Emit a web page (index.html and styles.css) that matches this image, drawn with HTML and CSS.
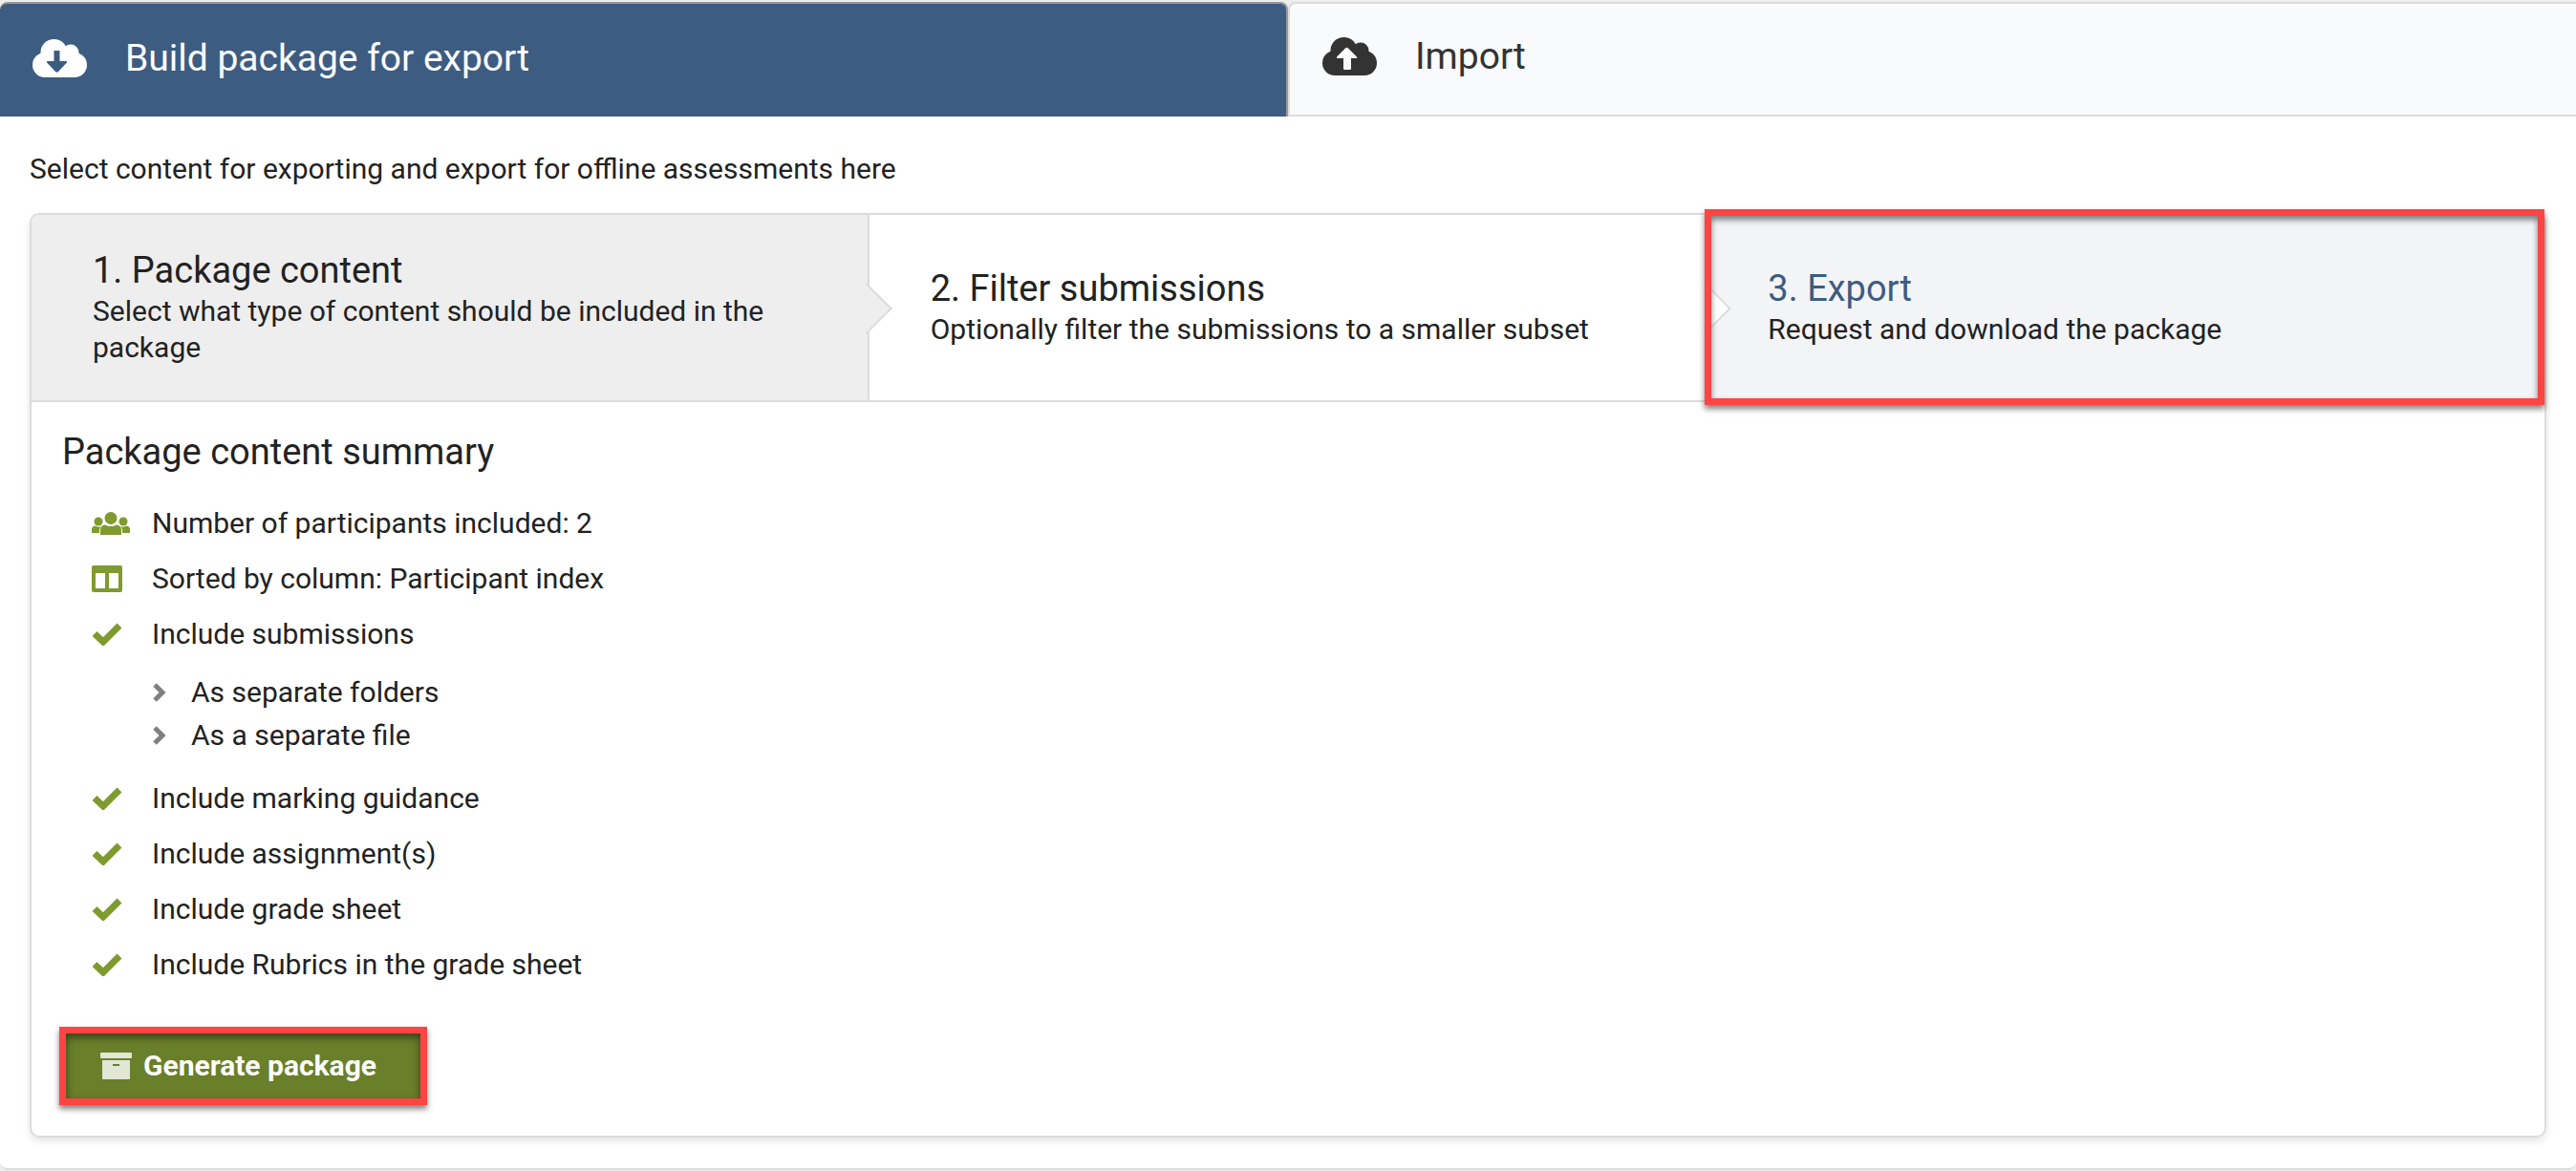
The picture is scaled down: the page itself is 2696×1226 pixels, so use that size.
FILE: index.html
```html
<!DOCTYPE html>
<html lang="en">
<head>
    <meta charset="UTF-8">
    <meta name="viewport" content="width=device-width, initial-scale=1.0">
    <title>Build package for export</title>
    <link rel="stylesheet" href="styles.css">
</head>
<body>
    <!-- shared icons -->
    <svg class="sprite" width="0" height="0" aria-hidden="true">
        <symbol id="check" viewBox="0 0 32 24">
            <path d="M3 11.500L12 20L29 3" fill="none" stroke="currentColor" stroke-width="7"/>
        </symbol>
        <symbol id="chevron" viewBox="0 0 14 20">
            <path d="M2 2L10 10L2 18" fill="none" stroke="currentColor" stroke-width="5"/>
        </symbol>
        <symbol id="cloud" viewBox="0 0 57 40">
            <circle cx="13" cy="27" r="13"/>
            <circle cx="22.500" cy="14" r="14"/>
            <circle cx="40" cy="14" r="8.500"/>
            <circle cx="44" cy="27" r="13"/>
            <path d="M13 16H40V14L46 27L44 40H13z"/>
        </symbol>
    </svg>

    <nav class="tabs" role="tablist">
        <button class="tab active" type="button" role="tab" aria-selected="true">
            <svg class="tab-icon" viewBox="0 0 57 40">
                <use href="#cloud"/>
                <path class="arrow" d="M22.500 12H28.500V23H35Q37 23 35.500 25L27 34Q25.500 35.500 24 34L15.500 25Q14 23 16 23H22.500z"/>
            </svg>
            <span>Build package for export</span>
        </button>
        <button class="tab" type="button" role="tab" aria-selected="false">
            <svg class="tab-icon" viewBox="0 0 57 40">
                <use href="#cloud"/>
                <path class="arrow" d="M22 22H16Q14 22 15.500 20L24 11.500Q25.500 10 27 11.500L35.500 20Q37.500 22 35 22H30V33Q30 34 29 34H23Q22 34 22 33z"/>
            </svg>
            <span>Import</span>
        </button>
    </nav>

    <main class="content">
        <p class="intro">Select content for exporting and export for offline assessments here</p>

        <div class="panel">
            <div class="steps">
                <a href="#content" class="step done">
                    <span class="step-title">1. Package content</span>
                    <span class="step-text">Select what type of content should be included in the package</span>
                </a>
                <a href="#filter" class="step">
                    <span class="step-title">2. Filter submissions</span>
                    <span class="step-text">Optionally filter the submissions to a smaller subset</span>
                </a>
                <a href="#export" class="step current">
                    <span class="step-title">3. Export</span>
                    <span class="step-text">Request and download the package</span>
                </a>
            </div>

            <section class="summary">
                <h2>Package content summary</h2>
                <ul class="list">
                    <li>
                        <svg class="icon users" viewBox="0 0 40 24">
                            <ellipse cx="20" cy="6.500" rx="6.500" ry="6.500"/>
                            <ellipse cx="7" cy="10" rx="4.500" ry="4.500"/>
                            <ellipse cx="33" cy="10" rx="4.500" ry="4.500"/>
                            <path d="M9 24V19Q9 14 14 13.500Q20 16.500 26 13.500Q31 14 31 19V24z"/>
                            <path d="M0 22V18Q0 15 3.500 14.500Q7 16.500 10 15Q8 17 8 19V22z"/>
                            <path d="M40 22V18Q40 15 36.500 14.500Q33 16.500 30 15Q32 17 32 19V22z"/>
                        </svg>
                        Number of participants included: 2
                    </li>
                    <li>
                        <svg class="icon columns" viewBox="0 0 32 28">
                            <path fill-rule="evenodd" d="M2 0H30Q32 0 32 2V26Q32 28 30 28H2Q0 28 0 26V2Q0 0 2 0zM4 8V24H14V8zM18 8V24H28V8z"/>
                        </svg>
                        Sorted by column: Participant index
                    </li>
                    <li>
                        <svg class="icon check"><use href="#check"/></svg>
                        Include submissions
                    </li>
                    <li class="nested">
                        <ul class="sublist">
                            <li><svg class="chevron"><use href="#chevron"/></svg>As separate folders</li>
                            <li><svg class="chevron"><use href="#chevron"/></svg>As a separate file</li>
                        </ul>
                    </li>
                    <li>
                        <svg class="icon check"><use href="#check"/></svg>
                        Include marking guidance
                    </li>
                    <li>
                        <svg class="icon check"><use href="#check"/></svg>
                        Include assignment(s)
                    </li>
                    <li>
                        <svg class="icon check"><use href="#check"/></svg>
                        Include grade sheet
                    </li>
                    <li>
                        <svg class="icon check"><use href="#check"/></svg>
                        Include Rubrics in the grade sheet
                    </li>
                </ul>
                <button class="generate" type="button">
                    <svg class="archive" viewBox="0 0 33 28">
                        <rect width="33" height="6" rx="1"/>
                        <path fill-rule="evenodd" d="M2 8H31V27Q31 28 30 28H3Q2 28 2 27zM13 12V14H20V12z"/>
                    </svg>
                    Generate package
                </button>
            </section>
        </div>
    </main>
</body>
</html>
```
FILE: styles.css
```css
* {
    box-sizing: border-box;
}
body {
    margin: 0;
    padding-top: 2px;
    background-color: #efefef;
    color: #222;
    font-family: Roboto, "Open Sans", sans-serif;
    font-size: 30px;
    line-height: 38px;
}
.sprite {
    position: absolute;
}

/* tabs */
.tabs {
    display: grid;
    grid-template-columns: 1fr 1fr;
    background: linear-gradient(#efefef 50%, #fff 50%);
}
.tab {
    display: flex;
    align-items: center;
    gap: 40px;
    height: 120px;
    padding: 0 34px 6px;
    border: 2px solid #dcdcdc;
    border-right: none;
    border-radius: 8px 0 0 0;
    background-color: #f9fafc;
    color: #333;
    font: inherit;
    font-size: 39px;
    line-height: 48px;
    text-align: left;
    cursor: pointer;
}
.tab.active {
    padding-bottom: 4px;
    border: 2px solid #999;
    border-left: none;
    border-bottom: none;
    border-radius: 8px 8px 0 0;
    background-color: #3d5c82;
    color: #fff;
}
.tab-icon {
    width: 57px;
    height: 40px;
    flex: none;
    fill: currentColor;
}
.arrow {
    fill: #f9fafc;
}
.active .arrow {
    fill: #3d5c82;
}

.content {
    padding: 36px 31px 32px;
    border-bottom: 2px solid #dcdcdc;
    border-radius: 0 0 8px 8px;
    background-color: #fff;
}
.intro {
    margin: 0 0 27px;
}

/* wizard panel */
.panel {
    border: 2px solid #dcdcdc;
    border-radius: 10px;
    box-shadow: 0 4px 8px rgba(0, 0, 0, 0.1);
}
.steps {
    display: grid;
    grid-template-columns: repeat(3, 1fr);
    border-bottom: 2px solid #dcdcdc;
}
.step {
    position: relative;
    display: flex;
    flex-direction: column;
    justify-content: center;
    min-height: 194px;
    padding: 0 64px;
    background-color: #fff;
    color: #222;
    text-decoration: none;
}
.step-title {
    margin-bottom: 2px;
    font-size: 38px;
    line-height: 44px;
}
.step.done {
    border-right: 2px solid #dcdcdc;
    border-radius: 8px 0 0 0;
    background-color: #eee;
}
/* arrow to the next step */
.step:not(.current)::after {
    content: "";
    position: absolute;
    z-index: 1;
    top: calc(50% - 18px);
    right: -18px;
    width: 36px;
    height: 36px;
    border: 2px solid #dcdcdc;
    border-left: none;
    border-bottom: none;
    background-color: inherit;
    transform: rotate(45deg);
}
.step.current {
    background-color: #f3f4f6;
}
.current .step-title {
    color: #3d5c82;
}
/* red marker */
.step.current::before {
    content: "";
    position: absolute;
    z-index: 2;
    inset: -6px 0 -5px -2px;
    border: 7px solid #ff4444;
    box-shadow: 0 4px 6px rgba(0, 0, 0, 0.5), inset 0 4px 6px rgba(0, 0, 0, 0.5);
}

/* summary */
.summary {
    padding: 28px 29px 32px;
}
h2 {
    margin: 0 0 22px;
    padding-left: 3px;
    font-size: 38px;
    font-weight: normal;
    line-height: 48px;
}
ul {
    margin: 0;
    padding: 0;
    list-style: none;
}
.list {
    padding-left: 34px;
}
.list li {
    display: flex;
    align-items: center;
    line-height: 58px;
}
.icon {
    flex: none;
    height: 28px;
    color: #7f9a2e;
    fill: currentColor;
}
.users {
    width: 40px;
    height: 24px;
    margin-right: 23px;
}
.columns {
    width: 32px;
    margin-right: 31px;
}
.check {
    width: 32px;
    height: 24px;
    margin-right: 31px;
}
.sublist {
    padding: 9px 0 15px 64px;
}
.list .sublist li {
    line-height: 45px;
}
.chevron {
    width: 14px;
    height: 20px;
    margin-right: 26px;
    color: #808080;
}
.generate {
    display: flex;
    align-items: center;
    gap: 12px;
    height: 82px;
    margin-top: 36px;
    padding: 0 46px 0 36px;
    border: 7px solid #ff4444;
    background-color: #6a7f2a;
    box-shadow: 0 4px 6px rgba(0, 0, 0, 0.5), inset 0 4px 8px rgba(0, 0, 0, 0.5);
    color: #fff;
    font: inherit;
    font-weight: bold;
    cursor: pointer;
}
.archive {
    width: 33px;
    height: 28px;
    fill: #e1e6d5;
}
```
